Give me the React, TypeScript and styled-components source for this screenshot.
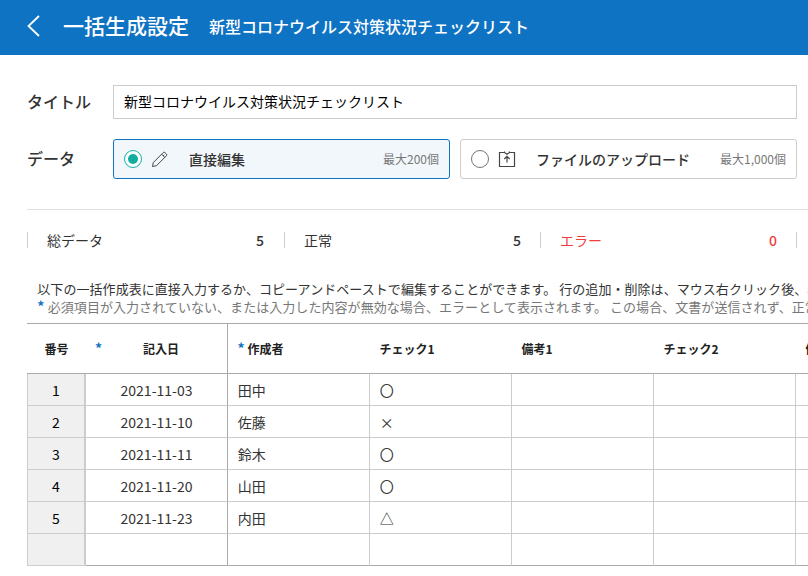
import React from 'react';
import styled, { createGlobalStyle } from 'styled-components';

const GlobalStyle = createGlobalStyle`
  * { box-sizing: border-box; }
  body {
    margin: 0;
    background: #fff;
    color: #333;
    font-family: 'Noto Sans CJK JP', 'Noto Sans', sans-serif;
    font-size: 14px;
  }
`;

const Page = styled.div`
  width: 808px;
  height: 576px;
  overflow: hidden;
`;

const Header = styled.header`
  display: flex;
  align-items: center;
  height: 55px;
  padding-left: 27px;
  background: #0f73c4;
  color: #fff;
  white-space: nowrap;
`;

const BackIcon = styled.svg`
  width: 13px;
  height: 22px;
  margin: -3px 23px 0 0;
`;

const Title = styled.h1`
  margin: 0 20px 0 0;
  padding-bottom: 5px;
  font-size: 21px;
  font-weight: 500;
  line-height: 30px;
`;

const Subtitle = styled.span`
  font-size: 16px;
  font-weight: 500;
  line-height: 24px;
  padding-bottom: 3px;
`;

const Content = styled.main`
  padding: 30px 0 0 27px;
`;

const Field = styled.div<{ $height: number }>`
  display: flex;
  align-items: center;
  height: ${(p) => p.$height}px;
  margin: 0 11px 20px 0;
`;

const Label = styled.label`
  width: 86px;
  flex: none;
  padding-bottom: 2px;
  font-size: 16px;
  font-weight: 500;
  line-height: 24px;
`;

const TitleInput = styled.input`
  flex: 1;
  height: 34px;
  min-width: 0;
  padding: 0 9px 2px 10px;
  border: 1px solid #ccc;
  border-radius: 0;
  outline: 0;
  color: #000;
  font: 400 14px 'Noto Sans CJK JP', sans-serif;
`;

const Options = styled.div`
  display: grid;
  flex: 1;
  grid-template-columns: 1fr 1fr;
  gap: 10px;
`;

const Option = styled.div<{ $active?: boolean }>`
  display: flex;
  align-items: center;
  height: 40px;
  padding: 0 10px;
  border: 1px solid ${(p) => (p.$active ? '#0f73c4' : '#ccc')};
  border-radius: 3px;
  background: ${(p) => (p.$active ? '#f2f7fc' : '#fff')};
`;

const Radio = styled.span<{ $active?: boolean }>`
  display: grid;
  place-items: center;
  width: 18px;
  height: 18px;
  border: 1px solid ${(p) => (p.$active ? '#12b5a2' : '#767676')};
  border-radius: 50%;
  background: #fff;

  &::after {
    content: '';
    width: 10px;
    height: 10px;
    border-radius: 50%;
    background: ${(p) => (p.$active ? '#12ada0' : 'transparent')};
  }
`;

const OptionIcon = styled.svg`
  width: 18px;
  height: 18px;
  margin: 0 20px 0 9px;
  fill: none;
  stroke: #444;
`;

const OptionName = styled.span`
  flex: 1;
  font-weight: 500;
  line-height: 20px;
  white-space: nowrap;
`;

const Limit = styled.span`
  color: #777;
  font-size: 12px;
  line-height: 18px;
`;

const Stats = styled.section`
  display: flex;
  height: 61px;
  padding-top: 22px;
  margin-top: 30px;
  border-top: 1px solid #e0e0e0;
`;

const Stat = styled.div<{ $error?: boolean; $width: number }>`
  display: flex;
  flex: none;
  justify-content: space-between;
  width: ${(p) => p.$width}px;
  height: 16px;
  padding: 0 19px;
  border-left: 1px solid #ccc;
  line-height: 16px;
  color: ${(p) => (p.$error ? '#f03e3e' : '#333')};

  &:first-child { padding-right: 20px; }
  strong { font-weight: 500; }
`;

const StatsEnd = styled.div`
  width: 1px;
  height: 16px;
  background: #ccc;
`;

const Notes = styled.div`
  padding: 10px 0 0 10.3px;
  height: 53px;
`;

const Note = styled.p<{ $muted?: boolean }>`
  margin: 0;
  font-size: 13px;
  line-height: 18px;
  letter-spacing: 0.055px;
  white-space: nowrap;
  color: ${(p) => (p.$muted ? '#777' : '#333')};
`;

const Star = styled.span`
  color: #0f73c4;
  font-size: 14px;
  font-weight: 700;
`;

const NoteStar = styled(Star)`
  margin-right: 0.3px;
  line-height: 0;
`;

const Table = styled.div`
  width: 855px;
`;

const columns = '59px repeat(6, 142px)';

const HeadRow = styled.div`
  display: grid;
  grid-template-columns: ${columns};
  grid-template-rows: 49px;
  height: 51px;
  border: solid #aaa;
  border-width: 1px 0;
  color: #222;
  font-size: 12px;
  font-weight: 700;
  line-height: 49px;
`;

const HeadCell = styled.div<{ $center?: boolean; $line?: boolean }>`
  padding-left: ${(p) => (p.$center ? 0 : 9.6)}px;
  border-right: ${(p) => (p.$line ? '1px solid #aaa' : '0')};
  text-align: ${(p) => (p.$center ? 'center' : 'left')};
  white-space: pre;
`;

const DateHead = styled(HeadCell)`
  display: flex;
  padding-left: 9px;
  gap: 41px;
`;

const Row = styled.div`
  display: grid;
  grid-template-columns: ${columns};
  grid-template-rows: 32px;
  height: 32px;
  line-height: 33px;
`;

const Cell = styled.div<{ $center?: boolean; $line?: boolean }>`
  padding-left: ${(p) => (p.$center ? 0 : 9.7)}px;
  border-right: 1px solid ${(p) => (p.$line ? '#aaa' : '#ccc')};
  border-bottom: 1px solid #ccc;
  text-align: ${(p) => (p.$center ? 'center' : 'left')};

  ${Row}:last-child & { border-bottom-color: #aaa; }
`;

const NumberCell = styled.div`
  border: solid #ccc;
  border-width: 0 2px 1px 1px;
  background: #f0f0f0;
  color: #000;
  text-align: center;
`;

const rows = [
  ['1', '2021-11-03', '田中', '〇'],
  ['2', '2021-11-10', '佐藤', '×'],
  ['3', '2021-11-11', '鈴木', '〇'],
  ['4', '2021-11-20', '山田', '〇'],
  ['5', '2021-11-23', '内田', '△'],
  ['', '', '', ''],
];

export default function App() {
  return (
    <Page>
      <GlobalStyle />
      <Header>
        <BackIcon viewBox="0 0 13 22" fill="none" stroke="#fff" strokeWidth="1.8">
          <path d="M12 1 1.5 11 12 21" />
        </BackIcon>
        <Title>一括生成設定</Title>
        <Subtitle>新型コロナウイルス対策状況チェックリスト</Subtitle>
      </Header>
      <Content>
        <Field $height={34}>
          <Label htmlFor="title">タイトル</Label>
          <TitleInput id="title" defaultValue="新型コロナウイルス対策状況チェックリスト" />
        </Field>
        <Field $height={40}>
          <Label>データ</Label>
          <Options>
            <Option $active>
              <Radio $active />
              <OptionIcon viewBox="0 0 18 18">
                <path d="M1.5 16.5 2.3 12.5 12.3 2.5Q13.1 1.8 13.9 2.5L15.5 4.1Q16.2 4.9 15.5 5.7L5.5 15.7ZM10.6 4.2 13.8 7.4M12.2 5.8 13.3 4.7" />
              </OptionIcon>
              <OptionName>直接編集</OptionName>
              <Limit>最大200個</Limit>
            </Option>
            <Option>
              <Radio />
              <OptionIcon viewBox="0 0 18 18">
                <path d="M6.5 1.5V2.5M11.5 1.5V2.5M6.5 2.5H1.5V16.5H16.5V2.5H11.5L9 4.2 6.5 2.5M9 12.5V6.5M6.3 9 9 6.3 11.7 9" strokeWidth="1.2" />
              </OptionIcon>
              <OptionName>ファイルのアップロード</OptionName>
              <Limit>最大1,000個</Limit>
            </Option>
          </Options>
        </Field>
        <Stats>
          <Stat $width={257}><span>総データ</span><strong>5</strong></Stat>
          <Stat $width={256}><span>正常</span><strong>5</strong></Stat>
          <Stat $width={256} $error><span>エラー</span><strong>0</strong></Stat>
          <StatsEnd />
        </Stats>
        <Notes>
          <Note>以下の一括作成表に直接入力するか、コピーアンドペーストで編集することができます。 行の追加・削除は、マウス右クリック後、表示</Note>
          <Note $muted><NoteStar>*</NoteStar> 必須項目が入力されていない、または入力した内容が無効な場合、エラーとして表示されます。 この場合、文書が送信されず、正常</Note>
        </Notes>
        <Table>
          <HeadRow>
            <HeadCell $center>番号</HeadCell>
            <DateHead $line><Star>*</Star><span>記入日</span></DateHead>
            <HeadCell><Star>*</Star> 作成者</HeadCell>
            <HeadCell>チェック1</HeadCell>
            <HeadCell>備考1</HeadCell>
            <HeadCell>チェック2</HeadCell>
            <HeadCell>備考2</HeadCell>
          </HeadRow>
          {rows.map(([no, date, name, check], i) => (
            <Row key={i}>
              <NumberCell>{no}</NumberCell>
              <Cell $center $line>{date}</Cell>
              <Cell>{name}</Cell>
              <Cell>{check}</Cell>
              <Cell />
              <Cell />
              <Cell />
            </Row>
          ))}
        </Table>
      </Content>
    </Page>
  );
}
